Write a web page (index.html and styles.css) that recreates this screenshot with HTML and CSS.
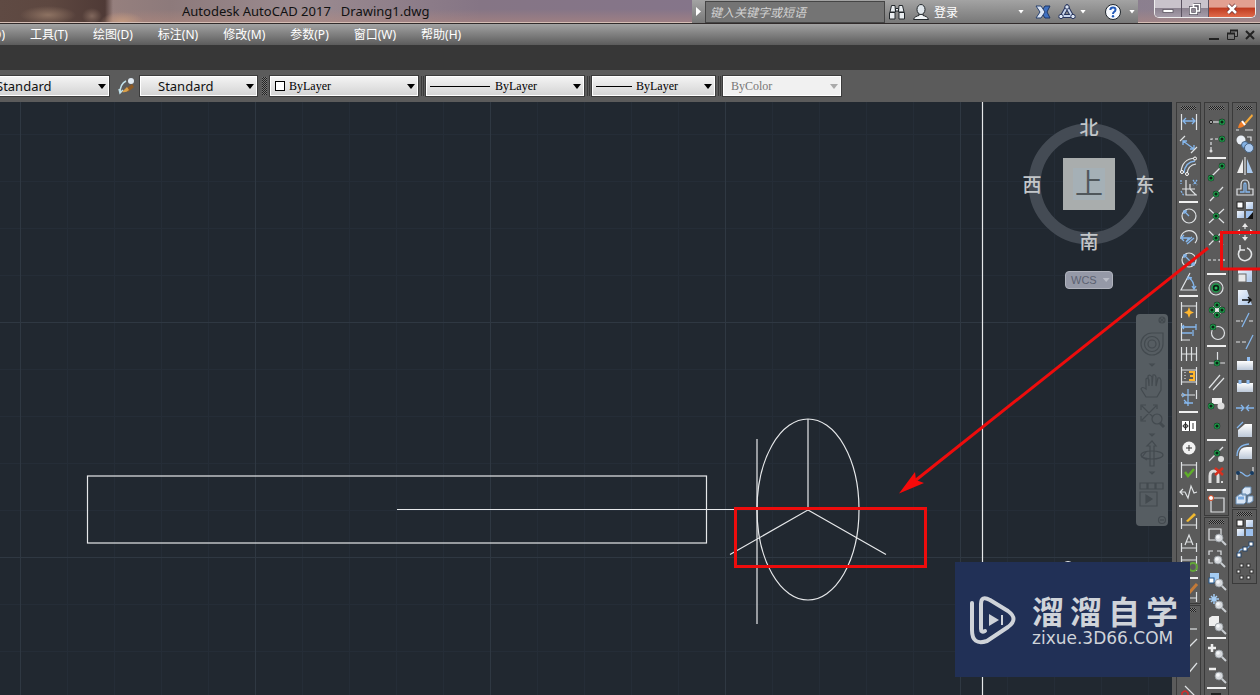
FILE: index.html
```html
<!DOCTYPE html>
<html lang="zh-CN">
<head>
<meta charset="utf-8">
<title>Autodesk AutoCAD 2017 - Drawing1.dwg</title>
<link rel="stylesheet" href="styles.css">
</head>
<body>
<svg class="defs" aria-hidden="true">
  <defs>
    <g id="dot"><circle r="3.2" fill="#0c2314"/><circle r="2.2" fill="none" stroke="#1f9c4c" stroke-width="1.3"/></g>
    <g id="lens"><path d="M2.5 2.5L7 7" stroke="#c9cdd1" stroke-width="2"/><circle r="4" fill="#d6d9dd" stroke="#8f959b" stroke-width=".8"/><circle cx="-1" cy="-1" r="1.8" fill="#f4f6f8"/></g>
    <linearGradient id="pane" x2="1" y2="1"><stop stop-color="#f2f6fc"/><stop offset="1" stop-color="#a9c4e8"/></linearGradient>
    <linearGradient id="plate" x2="0" y2="1"><stop stop-color="#fff"/><stop offset="1" stop-color="#bcc8d8"/></linearGradient>
  </defs>
</svg>

<header class="titlebar">
  <h1 class="title"><span>Autodesk AutoCAD 2017</span><span>Drawing1.dwg</span></h1>
  <div class="infocenter">
    <button class="expand" aria-label="展开"><svg width="5" height="9"><path d="M0 0L5 4.500L0 9Z" fill="#fff"/></svg></button>
    <input class="search" type="text" placeholder="键入关键字或短语" aria-label="搜索">
    <button class="info-btn find" aria-label="查找"><svg width="18" height="18" viewBox="0 0 18 18"><g fill="#e9edf0" stroke="#23282c"><path d="M3.500 2.500H7L7.500 9H2Z"/><path d="M11 2.500H14.500L16 9H10.500Z"/><path d="M1.500 9.500H7V16H1.500ZM11 9.500H16.500V16H11Z"/><path d="M7.500 5.500H10.500V8H7.500Z"/></g></svg></button>
    <button class="info-btn login" aria-label="登录"><svg width="18" height="18" viewBox="0 0 18 18"><path d="M1.500 16.500C2 14 5 13 7 12.500V11H11V12.500C13 13 16 14 16.500 16.500Z" fill="#f1f4f6" stroke="#23282c"/><ellipse cx="9" cy="6.500" rx="4" ry="5" fill="#dfe5ea" stroke="#23282c"/></svg><span>登录</span><i class="caret"></i></button>
    <button class="info-btn exchange" aria-label="Exchange"><svg width="16" height="14" viewBox="0 0 16 14"><path d="M15 1H10L6 7L10 13H15L12 7Z" fill="#3f70c0" stroke="#1e3766"/><path d="M1 1H6L10 7L6 13H1L5 7Z" fill="#dce6f4" stroke="#27406f"/></svg></button>
    <button class="info-btn share" aria-label="共享"><svg width="18" height="16" viewBox="0 0 18 16"><path d="M9 3L14 12H4Z" fill="none" stroke="#27345c" stroke-width="4"/><path d="M9 3L14 12H4Z" fill="none" stroke="#c9d6ec" stroke-width="2"/><g fill="#dce5f3" stroke="#27345c"><circle cx="9" cy="3" r="2.200"/><circle cx="3" cy="12.500" r="2.200"/><circle cx="15" cy="12.500" r="2.200"/></g></svg><i class="caret"></i></button>
    <button class="info-btn help" aria-label="帮助"><svg width="18" height="18" viewBox="0 0 18 18"><circle cx="9" cy="9" r="7.500" fill="#f7faff" stroke="#20262c"/><path d="M6.300 7Q6.500 4.500 9 4.500Q11.500 4.500 11.500 6.700Q11.500 8 10 9Q9 9.800 9 11" fill="none" stroke="#2259b8" stroke-width="2"/><circle cx="9" cy="13.300" r="1.200" fill="#2259b8"/></svg><i class="caret"></i></button>
  </div>
  <div class="window-buttons">
    <button class="win-btn" aria-label="最小化"><svg width="12" height="12" viewBox="0 0 12 12"><rect x="1" y="6.500" width="10" height="3" fill="#fff" stroke="#5b5560" stroke-width=".8"/></svg></button>
    <button class="win-btn" aria-label="还原"><svg width="12" height="12" viewBox="0 0 12 12"><path d="M4.500 1.500H10.500V8H8M1.500 4.500H7.500V10.500H1.500Z" fill="none" stroke="#514c58" stroke-width="3"/><path d="M4.500 4V1.500H10.500V8H8M1.500 4.500H7.500V10.500H1.500Z" fill="none" stroke="#fff" stroke-width="1.600"/></svg></button>
    <button class="win-btn win-close" aria-label="关闭"><svg width="12" height="12" viewBox="0 0 12 12"><path d="M2 2L10 10M10 2L2 10" stroke="#6b3030" stroke-width="4"/><path d="M2 2L10 10M10 2L2 10" stroke="#fff" stroke-width="2.600"/></svg></button>
  </div>
</header>

<nav class="menubar">
  <button class="menu cut">格式(O)</button>
  <button class="menu">工具(T)</button>
  <button class="menu">绘图(D)</button>
  <button class="menu">标注(N)</button>
  <button class="menu">修改(M)</button>
  <button class="menu">参数(P)</button>
  <button class="menu">窗口(W)</button>
  <button class="menu">帮助(H)</button>
  <div class="doc-buttons">
    <button aria-label="最小化图形"><svg width="11" height="12"><path d="M0 10H10" stroke="#222" stroke-width="2"/></svg></button>
    <button aria-label="还原图形"><svg width="13" height="12"><path d="M4.500 4V1.500H11.500V7.500H9M1.500 4.500H8.500V10.500H1.500Z" fill="none" stroke="#222"/><path d="M4 1.500H12M1 4.500H9" stroke="#222" stroke-width="2"/></svg></button>
    <button aria-label="关闭图形"><svg width="10" height="12"><path d="M1 2L9 10M9 2L1 10" stroke="#222" stroke-width="2"/></svg></button>
  </div>
</nav>
<div class="band"></div>

<div class="properties">
  <div class="combo dim-style"><select aria-label="标注样式"><option>Standard</option></select></div>
  <button class="brush" aria-label="表格样式"><svg width="18" height="18" viewBox="0 0 18 18"><path d="M2 16C2 10 4 6 8 4M1 12L2 16L5 13" fill="none" stroke="#bfe0ea" stroke-width="1.500"/><path d="M8 12L14 7L16 10L10 15Z" fill="#8d5a24"/><path d="M4 15L9 10L11 13Q8 16 4 15Z" fill="#d9a04a"/><circle cx="13" cy="4" r="3" fill="#dfe9f2"/></svg></button>
  <div class="combo table-style"><select aria-label="文字样式"><option>Standard</option></select></div>
  <span class="grip-v"></span>
  <div class="combo song color"><i class="swatch"></i><select aria-label="颜色"><option>ByLayer</option></select></div>
  <span class="split"></span>
  <div class="combo song linetype"><i class="rule"></i><select aria-label="线型"><option>ByLayer</option></select></div>
  <span class="split"></span>
  <div class="combo song weight"><i class="rule"></i><select aria-label="线宽"><option>ByLayer</option></select></div>
  <span class="split"></span>
  <div class="combo song plot"><select aria-label="打印样式" disabled><option>ByColor</option></select></div>
</div>

<main class="workspace">
  <section class="canvas">
    <svg class="drawing" aria-label="图形">
      <defs>
        <pattern id="grid" x="20" y="220" width="235" height="235" patternUnits="userSpaceOnUse">
          <path d="M47.500 0V235M94.500 0V235M141.500 0V235M188.500 0V235M0 47.500H235M0 94.500H235M0 141.500H235M0 188.500H235" stroke="#252d37"/>
          <path d="M.5 0V235M0 .5H235" stroke="#2f3842"/>
        </pattern>
      </defs>
      <rect width="100%" height="100%" fill="url(#grid)"/>
      <g fill="none" stroke="#e6e8ea" stroke-width="1.200">
        <path d="M982.500 0V600"/>
        <rect x="87.500" y="374" width="619" height="67"/>
        <path d="M397 407.500H808"/>
        <path d="M757 337V522M808 317V408L730 452.500M808 408L886 452.500"/>
        <ellipse cx="808" cy="407.500" rx="51" ry="90.500"/>
        <path d="M1064 461Q1068 458 1072 461"/>
      </g>
    </svg>
    <svg class="viewcube" width="136" height="140" viewBox="0 0 136 140">
      <circle cx="68" cy="70" r="54.500" fill="none" stroke="#444b54" stroke-width="12"/>
      <rect x="42" y="44" width="52" height="52" fill="#a9adad"/>
      <rect x="52" y="54" width="32" height="32" fill="#a5b0b6"/>
      <text class="face" x="68" y="80">上</text>
      <g class="compass"><text x="68" y="21">北</text><text x="68" y="135">南</text><text x="11" y="78">西</text><text x="124" y="78">东</text></g>
    </svg>
    <button class="wcs">WCS<i></i></button>
    <div class="navbar">
      <svg width="32" height="212" viewBox="0 0 32 212" fill="none" stroke="#434a4f" stroke-width="1.200">
        <circle cx="26" cy="6" r="3"/><path d="M24 4L28 8M28 4L24 8"/>
        <path d="M16 19H27V30A11 11 0 1 1 16 19Z"/><circle cx="16" cy="30" r="7.500"/><circle cx="16" cy="30" r="4"/>
        <path d="M14 50H18L16 52Z"/>
        <path d="M10 83L5 75Q6 72 10 75V65Q12 63 13 66V72L12 62Q14 60 16 63V72L17 61Q19 60 20 63V72L22 64Q24 63 25 66V76L21 83Z"/>
        <path d="M6 92L20 106M20 92L6 106M5 96V91H10M17 91H21V95M5 102V107H10"/><circle cx="21" cy="105" r="5" fill="#565d62"/><path d="M24 109L28 113" stroke-width="3"/>
        <path d="M14 120H18L16 122Z"/>
        <ellipse cx="16" cy="141" rx="11" ry="4"/><path d="M14 152V132H11L16 127L20 132H18V152ZM10 138L6 143L11 146"/>
        <path d="M14 158H18L16 160Z"/>
        <path d="M4 169H11V175H4ZM12 169H19V175H12ZM20 169H27V175H20ZM4 178H21V192H4Z"/><path d="M10 181V189L16 185Z" fill="#434a4f"/>
        <circle cx="26" cy="206" r="3.500"/><path d="M24 206H28"/>
      </svg>
    </div>
  </section>

  <aside class="docks">
    <div class="dock">
      <div class="bar">
        <span class="grip"></span>
        <button aria-label="线性"><svg><path class="w" d="M4.500 3V19M19.500 3V19"/><path class="b" d="M6 10H18M9 7L6 10L9 13M15 7L18 10L15 13"/></svg></button>
        <button aria-label="对齐"><svg><path class="b" d="M6 8L17 16M6 12V8H10M13 16H17V12"/><path class="w" d="M3 8L8 3M14 20L20 14"/></svg></button>
        <button aria-label="弧长"><svg><path class="w" d="M4 17Q5 4 18 3M10 19Q11 10 19 9"/><path class="b" d="M7 18Q8 7 18 6"/><g fill="#5c5c5c" stroke="#fff"><circle cx="5" cy="17" r="1.500"/><circle cx="10" cy="19" r="1.500"/><circle cx="18" cy="3.500" r="1.500"/></g></svg></button>
        <button aria-label="坐标"><svg><path class="w" d="M9 3V18H20M5 12H13L19 18M13 7V12H18"/><path class="b" d="M4 3V7M4 14L7 19M16 3L20 8M20 3L16 8" stroke-dasharray="2 1"/></svg></button>
        <hr>
        <button aria-label="半径"><svg><circle class="w" cx="12" cy="11" r="7"/><path class="b" d="M12 11L7 6M7 9V6H10"/></svg></button>
        <button aria-label="折弯"><svg><path class="w" d="M4 12A8 7.500 0 1 1 18 16"/><path class="b" d="M5 11H12L9 15L15 10M7 8L4 11L7 14M10 17L17 11"/></svg></button>
        <button aria-label="直径"><svg><circle class="w" cx="12" cy="11" r="7"/><path class="b" d="M7 6L17 16M7 9V6H10M14 16H17V13"/></svg></button>
        <button aria-label="角度"><svg><path class="w" d="M13 2L4 19H20"/><path class="b" d="M12 7Q17 10 17 17M11 9V6L15 7M15 15L17 18L19 15"/></svg></button>
        <hr>
        <button aria-label="快速标注"><svg><path class="w" d="M4.500 3V19M19.500 3V19M5 7H19"/><path d="M12 8L13.500 12L17 13.500L13.500 15L12 19L10.500 15L7 13.500L10.500 12Z" fill="#ffb62e"/></svg></button>
        <button aria-label="基线"><svg><path class="w" d="M4.500 2V20M4 19H13"/><path class="b" d="M5 6H19M5 12H15M16 9V15M19 3V9M7 4L5 6L7 8"/></svg></button>
        <button aria-label="连续"><svg><path class="w" d="M4.500 4V18M9.500 4V18M14.500 4V18M19.500 4V18M4 11H20"/></svg></button>
        <button aria-label="标注间距"><svg><path class="w" d="M4.500 2V20M19.500 2V20M5 5H19M5 17H19"/><path d="M12 7H17V15H12M13 11H17" stroke="#ffb62e" stroke-width="2" fill="none"/><path class="w" d="M8 7V15" stroke-dasharray="1 2"/></svg></button>
        <button aria-label="折断标注"><svg><path class="w" d="M19.500 3V12M4 8H18"/><path class="b" d="M11 2V19M7 16H16M7 13L11 17M5 6L8 8L5 10"/></svg></button>
        <hr>
        <button aria-label="公差"><svg><rect x="5" y="6" width="14" height="10" fill="#fff"/><path d="M12.500 6V16M8.500 7V15M5.500 11H11.500M16 8V14" stroke="#333"/><circle cx="8.500" cy="11" r="2" fill="none" stroke="#333"/></svg></button>
        <button aria-label="圆心标记"><svg><circle cx="12" cy="11" r="6.500" fill="#f2f2f2"/><path d="M12 8V14M9 11H15" stroke="#333"/></svg></button>
        <button aria-label="检验"><svg><path class="w" d="M4.500 3V19M19.500 3V19M5 6H19"/><path d="M8 13L11 17L17 10" stroke="#5fae2a" stroke-width="2.500" fill="none"/></svg></button>
        <button aria-label="折弯线性"><svg><path class="w" d="M3 11H8L11 17L14 5L17 12L20 11M6 8L3 11L6 14"/></svg></button>
        <hr>
        <button aria-label="编辑标注"><svg><path class="w" d="M4.500 9V20M19.500 9V20M5 16H19"/><path d="M9 12L17 4L19 6L11 13Z" fill="#f2b92f"/></svg></button>
        <button aria-label="编辑标注文字"><svg><path class="w" d="M4.500 12V21M19.500 12V21M5 17H19M8 14L12 4L16 14M9.500 11H14.500"/></svg></button>
        <button aria-label="标注更新"><svg><path class="w" d="M4.500 3V18M19.500 3V18M5 7H19"/><circle cx="16" cy="14" r="4" fill="none" stroke="#62a638" stroke-width="2"/></svg></button>
        <hr>
        <button aria-label="标注样式管理"><svg><path class="w" d="M19.500 11V21M5 17H19"/><path d="M12 12L20 3" stroke="#c27a38" stroke-width="3"/></svg></button>
      </div>
      <div class="bar">
        <span class="grip"></span>
        <button aria-label="直线"><svg><path class="w" d="M8 16H20"/></svg></button>
        <button aria-label="构造线"><svg><path class="w" d="M12 12L20 4"/></svg></button>
        <button aria-label="多段线"><svg><path class="w" d="M10 18L20 6"/></svg></button>
        <button aria-label="圆弧"><svg><path class="w" d="M8 7L20 19"/><path d="M5 20V14Q8 10 11 14V20" stroke="#d52b2b" fill="none" stroke-width="1.500"/></svg></button>
      </div>
    </div>

    <div class="dock">
      <div class="bar">
        <span class="grip"></span>
        <button aria-label="临时追踪点"><svg><path class="w" d="M6 11H17"/><circle cx="6" cy="11" r="1.500" stroke="#111" fill="#ddd"/><use href="#dot" x="17" y="11"/></svg></button>
        <button aria-label="捕捉自"><svg><path class="w" d="M6 17V6H16" stroke-dasharray="3 2"/><circle cx="6" cy="18" r="1.500" fill="#ddd"/><use href="#dot" x="17" y="6"/></svg></button>
        <hr>
        <button aria-label="端点"><svg><path class="w" d="M6 16L17 5"/><use href="#dot" x="6" y="17"/><use href="#dot" x="17" y="5"/></svg></button>
        <button aria-label="中点"><svg><path class="w" d="M5 18L18 4"/><use href="#dot" x="11" y="11"/></svg></button>
        <button aria-label="交点"><svg><path class="w" d="M4 4L19 18M19 4L4 18"/><use href="#dot" x="11" y="11"/></svg></button>
        <button aria-label="外观交点"><svg><path class="w" d="M4 4L9 9M14 14L18 18M18 4L4 18"/><use href="#dot" x="11" y="11"/></svg></button>
        <button aria-label="延长线"><svg><path class="w" d="M3 11H14" stroke-dasharray="3 2"/><path class="w" d="M14 11H20"/></svg></button>
        <hr>
        <button aria-label="圆心"><svg><circle class="w" cx="11" cy="11" r="7"/><circle cx="11" cy="11" r="4" fill="#0c2314" stroke="#1f9c4c" stroke-width="1.500"/><circle cx="11" cy="11" r="1.500" fill="#2cbb60"/></svg></button>
        <button aria-label="象限点"><svg><circle cx="12" cy="11" r="5" fill="#eee"/><use href="#dot" x="12" y="6"/><use href="#dot" x="12" y="16"/><use href="#dot" x="7" y="11"/><use href="#dot" x="17" y="11"/></svg></button>
        <button aria-label="切点"><svg><circle class="w" cx="13" cy="12" r="6.500"/><use href="#dot" x="8" y="6"/></svg></button>
        <hr>
        <button aria-label="垂足"><svg><path class="w" d="M12.500 3V14M4 14H20"/><use href="#dot" x="12" y="14"/></svg></button>
        <button aria-label="平行线"><svg><path class="w" d="M4 17L15 4M8 19L19 7"/></svg></button>
        <button aria-label="插入点"><svg><path d="M7 5H17V11H7Z" fill="#eee"/><circle cx="16" cy="13" r="3.500" fill="#ddd"/><use href="#dot" x="6" y="13"/></svg></button>
        <button aria-label="节点"><svg><use href="#dot" x="12" y="11"/></svg></button>
        <hr>
        <button aria-label="最近点"><svg><path class="w" d="M4 18L18 4"/><circle cx="16" cy="16" r="3" fill="#ddd"/><use href="#dot" x="12" y="10"/></svg></button>
        <button aria-label="无捕捉"><svg><path d="M5 18V11Q5 6 9 6Q13 6 13 11V18" fill="none" stroke="#ddd" stroke-width="3"/><path d="M10 3L18 10M18 3L10 10" stroke="#d7301f" stroke-width="2.500"/><circle cx="17" cy="17" r="1" fill="#fff"/></svg></button>
        <hr>
        <button aria-label="捕捉设置"><svg><path class="w" d="M6 5H19V19H6Z"/><circle cx="6" cy="5" r="2.500" fill="#fff" stroke="#d7461f"/></svg></button>
      </div>
      <div class="bar">
        <span class="grip"></span>
        <button aria-label="窗口缩放"><svg><path class="w" d="M4 4H16V15H4Z"/><use href="#lens" x="14" y="13"/></svg></button>
        <button aria-label="动态缩放"><svg><path class="w" d="M4 8V4H8M12 4H16V8M4 12V16H8"/><use href="#lens" x="13" y="13"/></svg></button>
        <button aria-label="比例缩放"><svg><rect x="5" y="4" width="9" height="9" fill="#a5cdf4"/><rect x="4" y="9" width="5" height="5" fill="#fff" stroke="#23598f"/><use href="#lens" x="14" y="14"/></svg></button>
        <button aria-label="中心缩放"><svg><path d="M9 3V13M4 8H14M6 5L12 11M12 5L6 11" stroke="#a5cdf4" stroke-width="1.500"/><use href="#lens" x="14" y="14"/></svg></button>
        <button aria-label="缩放对象"><svg><path d="M4 5L7 3H14V11L12 13H4Z" fill="#eee"/><use href="#lens" x="14" y="14"/></svg></button>
        <hr>
        <button aria-label="放大"><svg><path d="M7 3V11M3 7H11" stroke="#eee" stroke-width="2.500"/><use href="#lens" x="14" y="13"/></svg></button>
        <button aria-label="缩小"><svg><path d="M4 6H11" stroke="#eee" stroke-width="2.500"/><use href="#lens" x="14" y="13"/></svg></button>
        <hr>
        <button aria-label="全部缩放"><svg><rect x="6" y="2" width="10" height="12" fill="#222"/></svg></button>
      </div>
    </div>

    <div class="dock">
      <div class="bar">
        <span class="grip"></span>
        <button aria-label="删除"><svg><path class="w" d="M3 19H6M12 19H20"/><path d="M11 12L19 3L20 5L13 13Z" fill="#f5a93a"/><path d="M5 17Q6 11 10 10L13 13Q10 17 5 17Z" fill="#ef7d28"/><path d="M9 10L12 14" stroke="#fff" stroke-width="2"/></svg></button>
        <button aria-label="复制"><svg><circle cx="8" cy="7" r="4.500" fill="#e9eef5"/><circle cx="12" cy="12" r="3.500" fill="#83b1e4" stroke="#46617e"/><circle cx="16" cy="15" r="4.500" fill="#aac9ef" stroke="#46617e"/><path class="w" d="M14 4H18V8"/></svg></button>
        <button aria-label="镜像"><svg><path d="M10 4V18H4Z" fill="#eee"/><path d="M14 4V18H20Z" fill="#a9c9ee"/><path class="w" d="M12 2V20"/></svg></button>
        <button aria-label="偏移"><svg><path class="w" d="M4 18V12H8V8Q8 3 12 3Q16 3 16 8V12H20V18Z"/><path class="b" d="M7 15H11V8Q11 6 12 6Q13 6 13 8V15H17"/></svg></button>
        <button aria-label="阵列"><svg><rect x="4" y="3" width="6" height="6" fill="#fff" stroke="#222"/><rect x="13" y="3" width="7" height="7" fill="url(#pane)"/><rect x="4" y="12" width="7" height="7" fill="url(#pane)"/><rect x="13" y="12" width="7" height="7" fill="#9cc0ee"/><path d="M20 13V20H14Z" fill="#111"/></svg></button>
        <button aria-label="移动"><svg><path d="M12 2L15 6H9ZM12 20L15 16H9ZM3 11L7 8V14ZM21 11L17 8V14Z" fill="#e8e8e8"/><path class="w" d="M12 6V8M12 14V16"/></svg></button>
        <button aria-label="旋转"><svg><path d="M8 6A6.500 6.500 0 1 0 14 5M7 2V7H12" fill="none" stroke="#e2e4e6" stroke-width="1.600"/></svg></button>
        <button aria-label="缩放"><svg><rect x="5" y="4" width="14" height="13" fill="url(#pane)"/><rect x="5" y="9" width="8" height="8" fill="#e8e8e8" stroke="#666"/></svg></button>
        <button aria-label="拉伸"><svg><path d="M5 3H14L19 18H5Z" fill="url(#pane)"/><path d="M9 13H18M15 10L18 13L15 16" stroke="#111" stroke-width="1.500" fill="none"/></svg></button>
        <button aria-label="修剪"><svg><path class="w" d="M3 12H10M16 12H20" stroke-dasharray="4 1"/><path class="b" d="M9 18L16 4"/></svg></button>
        <button aria-label="延伸"><svg><path class="w" d="M3 11H14" stroke-dasharray="4 2"/><path class="b" d="M13 18L20 4"/></svg></button>
        <button aria-label="打断于点"><svg><rect x="4" y="8" width="16" height="9" fill="url(#plate)"/><rect x="14" y="4" width="3" height="4" fill="#91bdf0"/></svg></button>
        <button aria-label="打断"><svg><rect x="4" y="8" width="16" height="9" fill="url(#plate)"/><path d="M7 5V9M15 5V9" stroke="#91bdf0" stroke-width="3"/></svg></button>
        <button aria-label="合并"><svg><path class="b" d="M3 11H10M14 11H21M8 8L11 11L8 14M16 8L13 11L16 14"/></svg></button>
        <button aria-label="倒角"><svg><path d="M5 18V11L12 5H19V18Z" fill="url(#plate)"/><path class="b" d="M4 9L10 3"/></svg></button>
        <button aria-label="圆角"><svg><path d="M6 18V13Q7 6 14 6H19V18Z" fill="url(#plate)"/><path class="b" d="M4 15Q4 4 16 3"/></svg></button>
        <button aria-label="光顺曲线"><svg><path class="w" d="M4 17V10M20 4V10"/><path class="b" d="M5 10C10 5 12 20 19 9" stroke-width="2"/><circle cx="5" cy="10" r="2" fill="#163a60"/><circle cx="19" cy="10" r="2" fill="#163a60"/></svg></button>
        <button aria-label="分解"><svg><path d="M3 12L7 9H13V17L11 19H3ZM9 5L12 2H18V8L15 10H9ZM15 11H20V16L17 18H14Z" fill="#d9e6f5" stroke="#6588ad"/><path d="M5 13H11" stroke="#78a9df" stroke-width="3"/></svg></button>
      </div>
      <div class="bar">
        <span class="grip"></span>
        <button aria-label="矩形阵列"><svg><rect x="4" y="3" width="6" height="6" fill="#fff" stroke="#222"/><rect x="13" y="3" width="7" height="7" fill="url(#pane)"/><rect x="4" y="12" width="7" height="7" fill="url(#pane)"/><rect x="13" y="12" width="7" height="7" fill="#9cc0ee"/></svg></button>
        <button aria-label="路径阵列"><svg><path class="b" d="M5 17C7 4 11 16 18 5"/><g fill="#fff" stroke="#24446b"><rect x="4" y="14" width="4" height="4"/><rect x="10" y="8" width="4" height="4"/><rect x="16" y="3" width="4" height="4"/></g></svg></button>
        <button aria-label="环形阵列"><svg><g fill="#fff" stroke="#333"><rect x="7" y="3" width="3" height="3"/><rect x="14" y="3" width="3" height="3"/><rect x="4" y="9" width="3" height="3"/><rect x="17" y="9" width="3" height="3"/><rect x="7" y="15" width="3" height="3"/><rect x="14" y="15" width="3" height="3"/></g></svg></button>
      </div>
    </div>
  </aside>

  <svg class="callout" width="540" height="360" viewBox="720 220 540 360" aria-hidden="true">
    <g fill="none" stroke="#ee0c0c">
      <rect x="735.500" y="508.500" width="190" height="58" stroke-width="3"/>
      <path d="M1262 232.500H1221.500V269H1262" stroke-width="3"/>
      <path d="M1208 248L916 480" stroke-width="3"/>
    </g>
    <path d="M899 493.500L915 472L916 480L924 483Z" fill="#f50a0a"/>
  </svg>

  <div class="watermark">
    <svg width="50" height="52" viewBox="0 0 50 52" fill="none" stroke="#cfd3d9" stroke-width="4" stroke-linecap="round" stroke-linejoin="round">
      <path d="M4 9V36Q4 52 19 47L40 33Q51 25 40 17L22 6Q13 1 13 10V35Q13 39 17 37"/>
      <path d="M21 20V32L31 26Z" fill="#cfd3d9" stroke="none"/><path d="M34 21V31" stroke-width="2" stroke-linecap="butt"/>
    </svg>
    <div class="brand"><p class="brand-name"><span>溜</span><span>溜</span><span>自</span><span>学</span></p><p class="brand-url">zixue.3D66.COM</p></div>
  </div>
</main>
</body>
</html>
```

FILE: styles.css
```css
* { box-sizing: border-box; }
body {
  margin: 0;
  height: 100vh;
  display: flex;
  flex-direction: column;
  overflow: hidden;
  background: #5b5b5b;
  font: 12px "Noto Sans", "Noto Sans CJK SC", sans-serif;
}
button { padding: 0; border: 0; background: none; color: inherit; font: inherit; }
svg { display: block; }
.defs { position: absolute; width: 0; height: 0; }

.titlebar {
  flex: none;
  height: 24px;
  display: flex;
  overflow: hidden;
  border-bottom: 1px solid #312b2b;
  box-shadow: inset 0 -1px #d5beb5;
  background:
    radial-gradient(28px 9px at 48px 15px, #8d7262, transparent),
    radial-gradient(10px 8px at 92px 16px, #80675c, transparent),
    radial-gradient(22px 10px at 122px 22px, #c29a80, transparent),
    linear-gradient(90deg, #5f4a43 0, #5d4740 50px, #4f3a36 105px, transparent 113px),
    linear-gradient(transparent 40%, rgba(190, 140, 125, .45)),
    linear-gradient(90deg, #96807e 110px, #8d7a7b 170px, #9b8b90 300px, #857585 480px, #85758a 700px, #8d8290 100%);
}
.title {
  flex: 1;
  display: flex;
  gap: 10px;
  margin: 0;
  padding-left: 182px;
  color: #111;
  font-size: 13px;
  font-weight: 400;
  line-height: 23px;
  white-space: nowrap;
}
.infocenter {
  display: flex;
  align-items: center;
  width: 446px;
  height: 23px;
  background: linear-gradient(#a3a3a3, #787878);
  color: #fff;
}
.expand { width: 13px; height: 23px; display: grid; place-items: center; }
.search {
  width: 180px;
  height: 22px;
  padding: 0 4px;
  border: 1px solid #454545;
  background: #747474;
  color: #ddd;
  font: italic 12px "Noto Sans CJK SC", sans-serif;
}
.search::placeholder { color: #d2d2d2; }
.info-btn { display: flex; align-items: center; gap: 4px; }
.find { margin-left: 3px; }
.login { margin-left: 6px; width: 112px; }
.login .caret { margin-left: auto; }
.exchange { margin-left: 11px; }
.share { margin-left: 7px; }
.help { margin-left: 18px; gap: 7px; }
.caret { width: 6px; height: 4px; background: #fff; clip-path: polygon(0 0, 100% 0, 50% 100%); }
.window-buttons {
  display: flex;
  height: 18px;
  margin: 0 4px 0 16px;
  border: 1px solid #eee;
  border-top: 0;
  border-radius: 0 0 5px 5px;
  overflow: hidden;
}
.win-btn {
  width: 27px;
  display: grid;
  place-items: center;
  border-right: 1px solid #5a5260;
  background: linear-gradient(#c9c3cb 0 45%, #8c8390 50%, #a59ca9);
}
.win-close { width: 46px; border: 0; background: linear-gradient(#e2a091 0 40%, #c03d22 50%, #e06a4a); }

.menubar {
  flex: none;
  display: flex;
  align-items: center;
  gap: 25px;
  height: 21px;
  padding-right: 5px;
  background: linear-gradient(#a2a2a2, #5c5c5c);
  color: #fff;
}
.menu { height: 20px; line-height: 20px; white-space: nowrap; }
.cut { width: 5px; display: flex; justify-content: flex-end; overflow: hidden; }
.doc-buttons { display: flex; gap: 6px; margin-left: auto; }
.band { flex: none; height: 25px; background: #373737; }

.properties {
  flex: none;
  display: flex;
  align-items: center;
  height: 32px;
  margin-left: -60px;
  background: #5b5b5b;
}
.combo {
  position: relative;
  height: 22px;
  border: 1px solid #3c3c3c;
  background: linear-gradient(#f5f5f5, #d3d3d3);
}
.combo::after {
  content: "";
  position: absolute;
  right: 3px;
  top: 8px;
  width: 8px;
  height: 5px;
  background: #000;
  clip-path: polygon(0 0, 100% 0, 50% 100%);
}
.combo select {
  appearance: none;
  display: block;
  width: 100%;
  height: 20px;
  padding: 0 16px 0 18px;
  border: 1px solid #fff;
  background: none;
  color: #111;
  font: 13px "Noto Sans", sans-serif;
}
.song select { font: 12px "Liberation Serif", serif; color: #000; }
.dim-style { width: 170px; }
.dim-style select { padding-left: 54px; }
.brush { width: 29px; display: grid; place-items: center end; padding-right: 3px; }
.table-style { width: 119px; }
.table-style select { padding-left: 17px; }
.grip-v { width: 5px; height: 18px; margin: 0 2px 0 4px; background: repeating-conic-gradient(#222 0 25%, #777 0 50%) 0 0 / 2px 2px; }
.split { width: 3px; height: 20px; margin: 0 1px 0 2px; border: solid #3a3a3a; border-width: 0 1px; }
.color { width: 150px; }
.linetype { width: 160px; }
.linetype select { padding-left: 68px; }
.weight { width: 125px; }
.weight select { padding-left: 43px; }
.plot { width: 120px; background: #f1f1f1; }
.plot select { padding-left: 7px; color: #777; opacity: 1; }
.plot::after { background: #aaa; }
.swatch { position: absolute; left: 5px; top: 5px; width: 10px; height: 10px; border: 1px solid #000; background: #fff; }
.rule { position: absolute; left: 4px; top: 10px; width: 60px; height: 1px; background: #000; }
.weight .rule { width: 36px; }

.workspace { position: relative; flex: 1; min-height: 0; display: flex; }
.canvas { position: relative; flex: 1; overflow: hidden; background: #212830; }
.drawing { position: absolute; width: 100%; height: 100%; }
.viewcube { position: absolute; right: 15px; top: 12px; text-anchor: middle; }
.face { fill: #50575b; font: 28px "Noto Sans CJK SC", sans-serif; }
.compass { fill: #c3c7ca; font: 500 19px "Noto Sans CJK SC", sans-serif; }
.wcs {
  position: absolute;
  right: 59px;
  top: 169px;
  display: flex;
  align-items: center;
  gap: 6px;
  width: 48px;
  height: 18px;
  padding-left: 5px;
  border: 1px solid #b0b3bd;
  border-radius: 4px;
  background: #9599a7;
  color: #5c6272;
  font: 11px "Liberation Sans", sans-serif;
}
.wcs i { width: 7px; height: 4px; background: #b9bcc6; clip-path: polygon(0 0, 100% 0, 50% 100%); }
.navbar { position: absolute; right: 4px; top: 212px; border-radius: 4px; background: #565d62; }

.docks { display: flex; gap: 3px; padding: 0 3px 0 4px; background: #5b5b5b; }
.dock { width: 25px; overflow: hidden; }
.bar { padding-top: 3px; border: 1px solid #3a3a3a; margin-bottom: 1px; }
.bar + .bar { padding-top: 2px; }
.grip { display: block; width: 15px; height: 4px; margin: 0 auto 1px; background: repeating-conic-gradient(#1f1f1f 0 25%, #7c7c7c 0 50%) 0 0 / 2px 2px; }
.bar button { display: block; width: 23px; height: 22px; }
.bar svg { width: 23px; height: 22px; }
.bar hr { height: 2px; margin: 2px 2px; border: 0; background: #f0f0f0; }
.w { fill: none; stroke: #dfe2e4; stroke-width: 1.2; }
.b { fill: none; stroke: #85b7ed; stroke-width: 1.3; }

.callout { position: absolute; right: 0; top: 118px; }
.watermark {
  position: absolute;
  right: 70px;
  bottom: 18px;
  display: flex;
  align-items: center;
  gap: 14px;
  width: 235px;
  height: 115px;
  padding: 0 13px;
  background: #213056;
  color: #cfd3d9;
}
.watermark svg { flex: none; }
.brand p { margin: 0; }
.brand-name { display: flex; gap: 6px; font: bold 32px/36px "Noto Sans CJK SC", sans-serif; }
.brand-url { font: 17px/20px "DejaVu Sans", sans-serif; }
```
